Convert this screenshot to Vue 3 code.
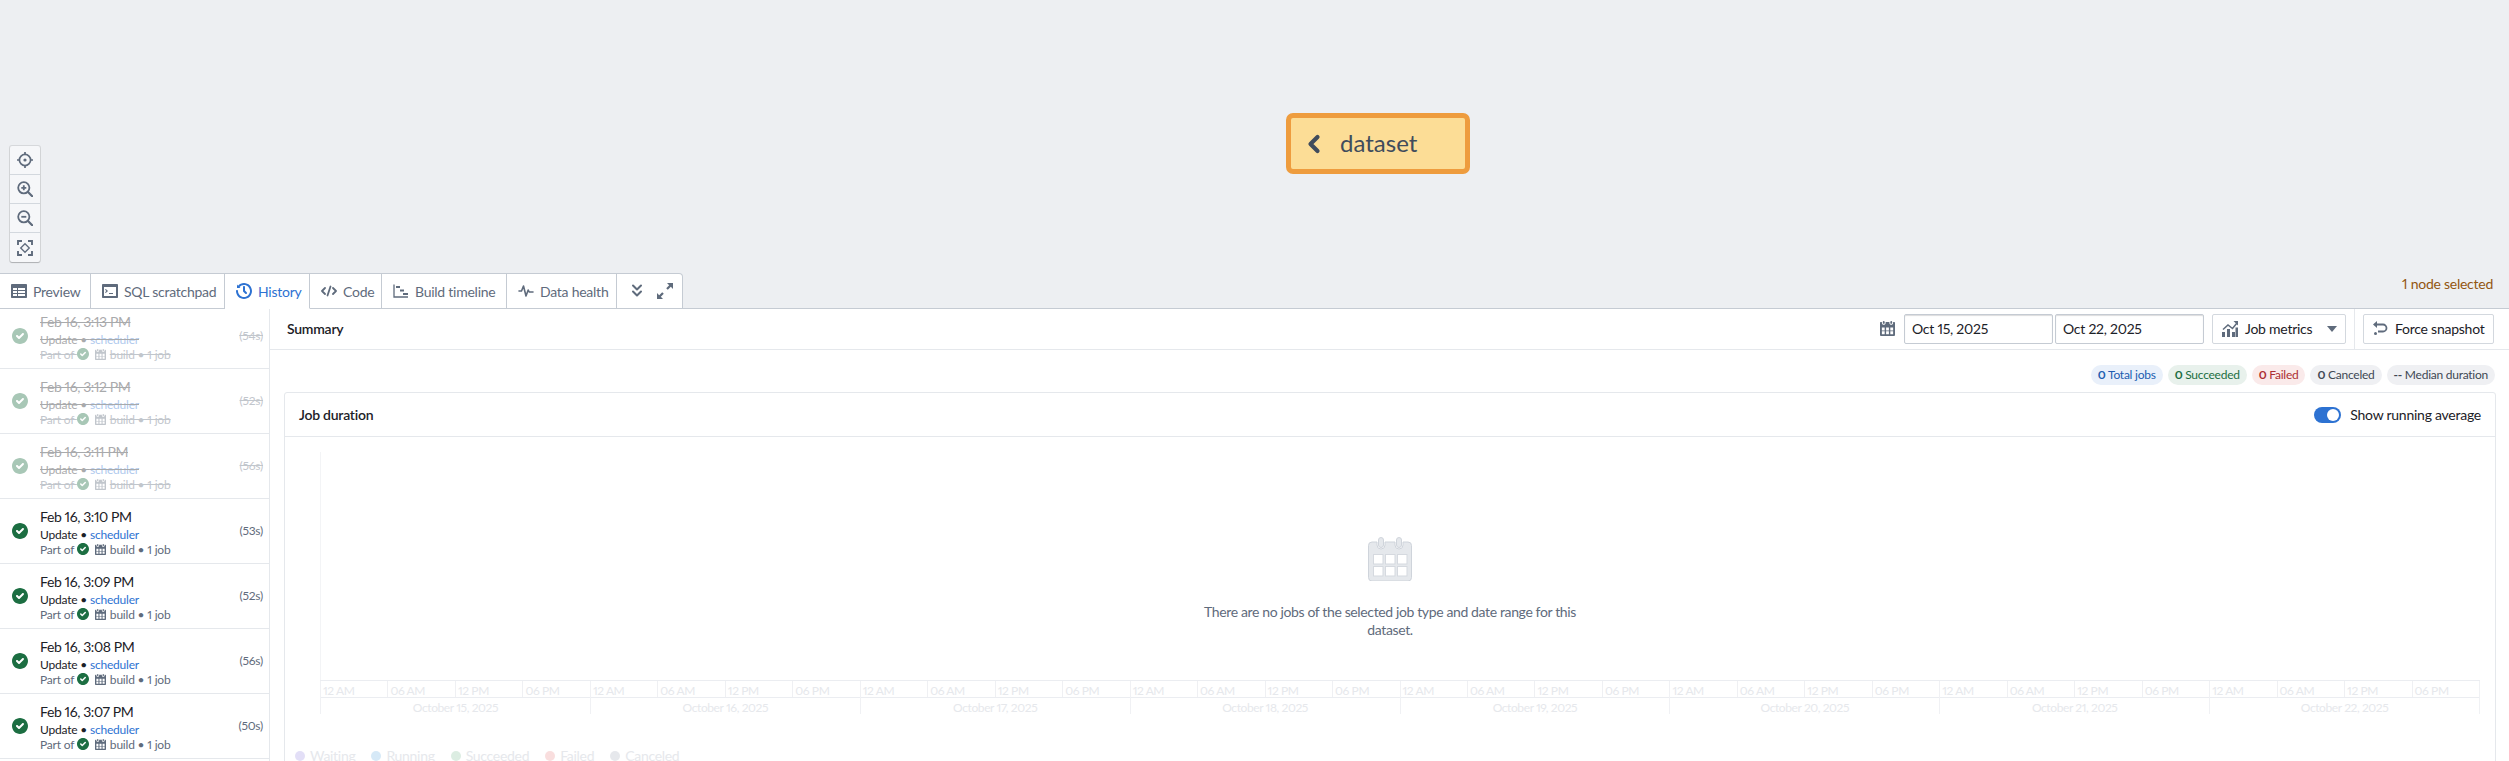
<script setup>
const tick = "M8 16c4.42 0 8-3.58 8-8s-3.58-8-8-8-8 3.58-8 8 3.58 8 8 8zM4 8c0-.55.45-1 1-1 .28 0 .53.11.71.29L7 8.59l3.29-3.29c.18-.19.43-.3.71-.3a1.003 1.003 0 01.71 1.71l-4 4c-.18.18-.43.29-.71.29s-.53-.11-.71-.29l-2-2A.965.965 0 014 8z";
const cal = "M12 3c.6 0 1-.5 1-1V1c0-.6-.4-1-1-1s-1 .4-1 1v1c0 .5.4 1 1 1zm3-2h-1v1c0 1.1-.9 2-2 2s-2-.9-2-2V1H6v1c0 1.100-.9 2-2 2s-2-.9-2-2V1H1c-.6 0-1 .5-1 1v13c0 .6.4 1 1 1h14c.6 0 1-.4 1-1V2c0-.6-.5-1-1-1zM5 14H2v-3h3v3zm0-4H2V7h3v3zm4.500 4h-3v-3h3v3zm0-4h-3V7h3v3zM14 14h-3v-3h3v3zm0-4h-3V7h3v3zM4 3c.6 0 1-.5 1-1V1c0-.6-.4-1-1-1S3 .4 3 1v1c0 .5.4 1 1 1z";
const rows = [
  { t: "Feb 16, 3:13 PM", d: "(54s)", old: true },
  { t: "Feb 16, 3:12 PM", d: "(52s)", old: true },
  { t: "Feb 16, 3:11 PM", d: "(56s)", old: true },
  { t: "Feb 16, 3:10 PM", d: "(53s)" },
  { t: "Feb 16, 3:09 PM", d: "(52s)" },
  { t: "Feb 16, 3:08 PM", d: "(56s)" },
  { t: "Feb 16, 3:07 PM", d: "(50s)" },
];
const days = ["October 15, 2025","October 16, 2025","October 17, 2025","October 18, 2025","October 19, 2025","October 20, 2025","October 21, 2025","October 22, 2025"];
const hours = ["12 AM","06 AM","12 PM","06 PM"];
const legend = [
  { n: "Waiting", c: "#8f7ee0" },
  { n: "Running", c: "#5aa9e0" },
  { n: "Succeeded", c: "#72b98c" },
  { n: "Failed", c: "#e77a7a" },
  { n: "Canceled", c: "#9aa3b5" },
];
</script>

<template>
  <div class="page">
    <div class="canvas">
      <div class="node">
        <svg class="node-chev" viewBox="0 0 14 20" width="14" height="20"><path d="M10.500 3 L3.500 10 L10.500 17" fill="none" stroke="#404c5c" stroke-width="4.200" stroke-linecap="round" stroke-linejoin="round"/></svg>
        <span>dataset</span>
      </div>
      <div class="zoombar">
        <div class="zb"><svg viewBox="0 0 16 16" width="16" height="16" fill="none" stroke="#5f6b7c" stroke-width="1.700"><circle cx="8" cy="8" r="5.600"/><circle cx="8" cy="8" r="1.600" fill="#5f6b7c" stroke="none"/><path d="M8 0v2.500M8 13.500V16M0 8h2.500M13.500 8H16"/></svg></div>
        <div class="zb"><svg viewBox="0 0 16 16" width="16" height="16" fill="none" stroke="#5f6b7c" stroke-width="1.800"><circle cx="6.800" cy="6.800" r="5.600"/><path d="M11 11l4.200 4.200" stroke-width="2.200" stroke-linecap="round"/><path d="M4.300 6.800h5M6.800 4.300v5"/></svg></div>
        <div class="zb"><svg viewBox="0 0 16 16" width="16" height="16" fill="none" stroke="#5f6b7c" stroke-width="1.800"><circle cx="6.800" cy="6.800" r="5.600"/><path d="M11 11l4.200 4.200" stroke-width="2.200" stroke-linecap="round"/><path d="M4.300 6.800h5"/></svg></div>
        <div class="zb"><svg viewBox="0 0 16 16" width="16" height="16" fill="none" stroke="#5f6b7c" stroke-width="1.900"><path d="M1 5V1h4M11 1h4v4M15 11v4h-4M5 15H1v-4"/><path d="M8 3.700 12.300 8 8 12.300 3.700 8z" stroke-width="1.300"/></svg></div>
      </div>
    </div>

    <div class="tabbar">
      <div class="tab"><svg viewBox="0 0 16 16" width="16" height="16" class="ic"><path d="M15 1H1c-.6 0-1 .5-1 1v12c0 .6.4 1 1 1h14c.6 0 1-.4 1-1V2c0-.5-.4-1-1-1zM6 13H2v-2h4v2zm0-3H2V8h4v2zm0-3H2V5h4v2zm8 6H7v-2h7v2zm0-3H7V8h7v2zm0-3H7V5h7v2z"/></svg>Preview</div>
      <div class="tab"><svg viewBox="0 0 16 16" width="16" height="16" class="ic"><path fill-rule="evenodd" d="M15 1H1c-.6 0-1 .5-1 1v12c0 .6.4 1 1 1h14c.6 0 1-.4 1-1V2c0-.5-.4-1-1-1zM14 13H2V4h12v9zM3.800 6l2.200 2-2.200 2-.8-.8L4.400 8 3 6.800zM7 10h4v1H7z"/></svg>SQL scratchpad</div>
      <div class="tab active"><svg viewBox="0 0 16 16" width="16" height="16" class="ic blue"><path d="M8 3c-.55 0-1 .45-1 1v4c0 .28.11.53.29.71l2 2a1.003 1.003 0 001.42-1.420L9 7.590V4c0-.55-.45-1-1-1zm0-3C5.640 0 3.530 1.030 2.070 2.660L1 1.590V5h3.410L3.500 4.090A5.980 5.980 0 018 2c3.310 0 6 2.690 6 6s-2.690 6-6 6-6-2.690-6-6c0-.55-.45-1-1-1s-1 .45-1 1c0 4.420 3.580 8 8 8s8-3.580 8-8-3.580-8-8-8z"/></svg>History</div>
      <div class="tab"><svg viewBox="0 0 16 16" width="16" height="16" class="ic"><path fill="none" stroke="#5f6b7c" stroke-width="1.800" stroke-linecap="round" stroke-linejoin="round" d="M4 5 1 8l3 3M12 5l3 3-3 3M9.500 3.500l-3 9"/></svg>Code</div>
      <div class="tab"><svg viewBox="0 0 16 16" width="16" height="16" class="ic"><path fill="none" stroke="#5f6b7c" stroke-width="1.300" d="M1 1.500V14h14"/><path d="M3 3h4v2H3zM7 6.500h4v2H7zM10 10h5v2h-5z"/></svg>Build timeline</div>
      <div class="tab"><svg viewBox="0 0 16 16" width="16" height="16" class="ic"><path fill="none" stroke="#5f6b7c" stroke-width="1.600" stroke-linejoin="round" stroke-linecap="round" d="M1 8h2.500l2-5 2.500 10 2.200-6 1 2H15"/></svg>Data health</div>
      <div class="tab tools">
        <svg viewBox="0 0 16 16" width="16" height="16"><path fill="none" stroke="#5f6b7c" stroke-width="2" stroke-linecap="round" stroke-linejoin="round" d="M4 2.500 8 6.500l4-4M4 8.500l4 4 4-4"/></svg>
        <svg viewBox="0 0 16 16" width="16" height="16"><path fill="#5f6b7c" d="M10 0h6v6l-2.200-2.200-3 3-1.600-1.600 3-3zM6 16H0v-6l2.200 2.200 3-3 1.600 1.600-3 3z"/></svg>
      </div>
      <div class="selected">1 node selected</div>
    </div>

    <div class="body">
      <aside class="side">
        <div class="list">
          <div v-for="r in rows" :key="r.t" class="row" :class="{ old: r.old }">
            <svg class="rt" viewBox="0 0 16 16" width="16" height="16"><path fill="#1c6e42" :d="tick"/></svg>
            <div class="rc">
              <div class="rd">{{ r.t }}</div>
              <div class="r2">Update • <span class="link">scheduler</span></div>
              <div class="r3">Part of <svg viewBox="0 0 16 16" width="12" height="12"><path fill="#1c6e42" :d="tick"/></svg><svg class="c2" viewBox="0 0 16 16" width="11" height="11"><path fill="#5f6b7c" :d="cal"/></svg><span>build • 1 job</span></div>
            </div>
            <div class="dur">{{ r.d }}</div>
          </div>
        </div>
      </aside>

      <main class="main">
        <div class="sumbar">
          <div class="sumtitle">Summary</div>
          <svg class="sumcal" viewBox="0 0 16 16" width="15" height="15"><path fill="#5f6b7c" :d="cal"/></svg>
          <div class="input">Oct 15, 2025</div>
          <div class="input second">Oct 22, 2025</div>
          <div class="btn metrics">
            <svg viewBox="0 0 16 16" width="16" height="16"><path fill="#5f6b7c" d="M0 11h3v5H0zM5 8h3v8H5zM10 11h3v5h-3zM13.500 6.500h2.500V16h-2.500z"/><path fill="none" stroke="#5f6b7c" stroke-width="1.500" d="M1 8.500l5-4.500 4.500 3.500L15 2"/><path fill="#5f6b7c" d="M11.500 0H16v4.500z"/></svg>
            <span>Job metrics</span>
            <svg viewBox="0 0 10 6" width="10" height="6"><path fill="#5f6b7c" d="M0 0h10L5 6z"/></svg>
          </div>
          <div class="vsep"></div>
          <div class="btn snap">
            <svg viewBox="0 0 16 16" width="16" height="16"><path fill="none" stroke="#5f6b7c" stroke-width="1.800" d="M5 3.500h6a3.500 3.500 0 010 7H6"/><path fill="#5f6b7c" d="M5 0v7L1 3.500z"/><circle cx="3.500" cy="12.500" r="1.500" fill="#5f6b7c"/></svg>
            <span>Force snapshot</span>
          </div>
        </div>

        <div class="chips">
          <span class="chip c-blue"><b>0</b> Total jobs</span>
          <span class="chip c-green"><b>0</b> Succeeded</span>
          <span class="chip c-red"><b>0</b> Failed</span>
          <span class="chip c-gray"><b>0</b> Canceled</span>
          <span class="chip c-gray"><b>--</b> Median duration</span>
        </div>

        <section class="card">
          <header class="cardhead">
            <div class="cardtitle">Job duration</div>
            <div class="toggle"><i class="knob"></i></div>
            <div class="tlabel">Show running average</div>
          </header>
          <div class="chart">
            <div class="plot"></div>
            <div class="axis">
              <div v-for="d in days" :key="d" class="day">
                <div class="hrs"><div v-for="h in hours" :key="h" class="hr">{{ h }}</div></div>
                <div class="dlabel">{{ d }}</div>
              </div>
            </div>
          </div>
          <div class="legend">
            <div v-for="l in legend" :key="l.n" class="li"><i class="dot" :style="{ background: l.c }"></i>{{ l.n }}</div>
          </div>
          <div class="empty">
            <svg viewBox="0 0 44 44" width="44" height="44">
              <path fill="#e5e8ec" stroke="#cfd4db" stroke-width="1" d="M4 5h5v3a4 4 0 008 0V5h10v3a4 4 0 008 0V5h5a3.500 3.500 0 013.500 3.500v32A3.500 3.500 0 0140 44H4a3.500 3.500 0 01-3.500-3.500v-32A3.500 3.500 0 014 5z"/>
              <rect x="10.500" y="0.500" width="5" height="10" rx="2.500" fill="#e5e8ec" stroke="#cfd4db"/>
              <rect x="28.500" y="0.500" width="5" height="10" rx="2.500" fill="#e5e8ec" stroke="#cfd4db"/>
              <g fill="#fff" stroke="#d5d9df"><rect x="5.500" y="17.500" width="9.500" height="9.500"/><rect x="17.500" y="17.500" width="9.500" height="9.500"/><rect x="29.500" y="17.500" width="9.500" height="9.500"/><rect x="5.500" y="29.500" width="9.500" height="9.500"/><rect x="17.500" y="29.500" width="9.500" height="9.500"/><rect x="29.500" y="29.500" width="9.500" height="9.500"/></g>
            </svg>
            <p>There are no jobs of the selected job type and date range for this dataset.</p>
          </div>
        </section>
      </main>
    </div>
  </div>
</template>

<style>
html, body { margin: 0; background: #fff; }
</style>

<style scoped>
.page { width: 2509px; height: 761px; overflow: hidden; display: flex; flex-direction: column; font-family: "Lato", "Noto Sans", sans-serif; font-size: 14px; color: #1c2127; background: #fff; letter-spacing: -.25px; font-variant-numeric: proportional-nums; }
.canvas { height: 273px; flex: none; background: #edeff2; position: relative; }
.node { position: absolute; left: 1286px; top: 113px; width: 184px; height: 61px; box-sizing: border-box; background: #fcdd96; border: 5px solid #ee9c3e; border-radius: 7px; display: flex; align-items: center; padding: 0 0 3px 16px; gap: 19px; font-size: 24px; letter-spacing: 0; color: #404c5c; }
.node-chev { margin-top: 3px; }
.zoombar { position: absolute; left: 10px; top: 146px; width: 30px; background: #f6f7f9; border-radius: 2px; box-shadow: 0 0 0 1px rgba(17,20,24,.1), 0 1px 1px rgba(17,20,24,.2); }
.zb { height: 29px; display: flex; align-items: center; justify-content: center; border-bottom: 1px solid #d3d8de; box-sizing: border-box; }
.zb:last-child { border-bottom: 0; }

.tabbar { height: 36px; flex: none; box-sizing: border-box; background: #edeff2; border-bottom: 1px solid #c5cbd3; display: flex; }
.tab { height: 36px; box-sizing: border-box; background: #fff; border-top: 1px solid #c5cbd3; border-right: 1px solid #c5cbd3; border-bottom: 1px solid #c5cbd3; display: flex; align-items: center; gap: 6px; padding: 0 0 0 11px; color: #5f6b7c; white-space: nowrap; font-size: 14px; }
.tab:nth-child(1) { width: 91px; }
.tab:nth-child(2) { width: 134px; }
.tab:nth-child(3) { width: 85px; }
.tab:nth-child(4) { width: 72px; }
.tab:nth-child(5) { width: 125px; }
.tab:nth-child(6) { width: 110px; }
.tab.active { color: #2d72d2; border-bottom-color: #fff; }
.ic { fill: #5f6b7c; flex: none; }
.ic.blue { fill: #2d72d2; }
.tab.tools { width: 66px; gap: 12px; padding: 0 0 0 12px; border-top-right-radius: 4px; }
.selected { margin-left: auto; padding: 0 16px 0 0; line-height: 19px; margin-top: 1px; color: #935610; font-size: 14px; }

.body { flex: 1; min-height: 0; display: flex; }
.side { width: 270px; flex: none; box-sizing: border-box; border-right: 1px solid #e5e8ec; overflow: hidden; }
.list { margin-top: -5px; }
.row { height: 65px; box-sizing: border-box; border-bottom: 1px solid #e5e8ec; display: flex; align-items: center; padding: 0 6px 0 12px; }
.rt { flex: none; margin-right: 12px; }
.rc { flex: 1; min-width: 0; padding-top: 2px; }
.rd { font-size: 14px; line-height: 18px; letter-spacing: -.4px; }
.r2 { font-size: 12px; line-height: 15px; margin-top: 1px; letter-spacing: -.2px; }
.r3 { font-size: 12px; line-height: 15px; color: #5f6b7c; display: flex; align-items: center; white-space: pre; letter-spacing: -.2px; }
.r3 svg { flex: none; }
.c2 { margin: 0 4px 0 6px; }
.link { color: #2d72d2; }
.dur { font-size: 12px; color: #5f6b7c; margin-top: -2px; }
.old .rc, .old .dur, .old .rt { opacity: .38; }
.old .rd, .old .r2, .old .r3, .old .r3 span, .old .dur { text-decoration: line-through; }

.main { flex: 1; min-width: 0; }
.sumbar { height: 41px; box-sizing: border-box; border-bottom: 1px solid #e5e8ec; display: flex; align-items: center; padding: 0 15px 1px 17px; }
.sumtitle { font-weight: 600; font-size: 14px; margin-right: auto; }
.sumcal { margin-right: 9px; }
.input { width: 149px; height: 30px; box-sizing: border-box; border: 1px solid #c5cbd3; border-radius: 2px; box-shadow: inset 0 1px 1px rgba(17,20,24,.15); line-height: 28px; padding-left: 7px; }
.input.second { margin-left: 2px; }
.btn { height: 30px; box-sizing: border-box; border: 1px solid #d3d8de; border-radius: 2px; display: flex; align-items: center; }
.metrics { width: 134px; margin-left: 8px; padding: 0 8px 0 9px; gap: 7px; }
.metrics span { flex: 1; }
.vsep { width: 1px; height: 40px; background: #e5e8ec; margin: 0 8px; }
.snap { width: 131px; padding-left: 8px; gap: 7px; }

.chips { display: flex; justify-content: flex-end; gap: 5px; padding: 15px 14px 0 0; }
.chip { height: 20px; box-sizing: border-box; border-radius: 10px; padding: 0 7px; font-size: 12px; line-height: 20px; white-space: nowrap; }
.chip b { font-weight: 700; }
.c-blue { background: #e9f0fa; color: #215db0; }
.c-green { background: #e8f1ec; color: #1c6e42; }
.c-red { background: #faeaea; color: #ac2f33; }
.c-gray { background: #eff0f3; color: #404854; }

.card { position: relative; margin: 7px 13px 0 14px; border: 1px solid #e5e8ec; border-radius: 3px; }
.cardhead { height: 44px; box-sizing: border-box; border-bottom: 1px solid #e5e8ec; display: flex; align-items: center; padding: 0 14px 0 14px; }
.cardtitle { font-weight: 600; margin-right: auto; }
.toggle { width: 27px; height: 16px; border-radius: 8px; background: #2d72d2; position: relative; margin-right: 9px; }
.knob { position: absolute; right: 2px; top: 2px; width: 12px; height: 12px; border-radius: 50%; background: #fff; }
.tlabel { font-size: 14px; }

.chart { margin: 15px 0 0 35px; width: 2160px; }
.plot { height: 228px; border-left: 1px solid #f3f4f6; position: relative; }
.axis { display: flex; border-top: 1px solid #ebedf1; }
.day { flex: 1; min-width: 0; border-left: 1px solid #f0f1f4; box-sizing: border-box; }
.day:last-child { border-right: 1px solid #f0f1f4; }
.hrs { display: flex; height: 17px; box-sizing: border-box; border-bottom: 1px solid #ebedf1; }
.hr { flex: 1; font-size: 12px; height: 16px; overflow: hidden; line-height: 19px; padding-left: 2px; color: #e6e8ec; border-left: 1px solid #eff0f3; letter-spacing: -.4px; }
.hr:first-child { border-left: 0; }
.dlabel { height: 16px; overflow: hidden; line-height: 20px; text-align: center; font-size: 12px; color: #e6e8ec; letter-spacing: -.4px; }
.legend { display: flex; gap: 16px; margin: 33px 0 0 10px; }
.li { display: flex; align-items: center; gap: 5px; color: #e6e8ec; font-size: 14px; line-height: 18px; letter-spacing: -.3px; }
.dot { width: 10px; height: 10px; border-radius: 50%; opacity: .25; }
.empty { position: absolute; left: 0; right: 0; top: 144px; display: flex; flex-direction: column; align-items: center; color: #5f6b7c; }
.empty p { width: 400px; margin: 22px 0 0; text-align: center; font-size: 14px; line-height: 18px; letter-spacing: -.37px; }
</style>
